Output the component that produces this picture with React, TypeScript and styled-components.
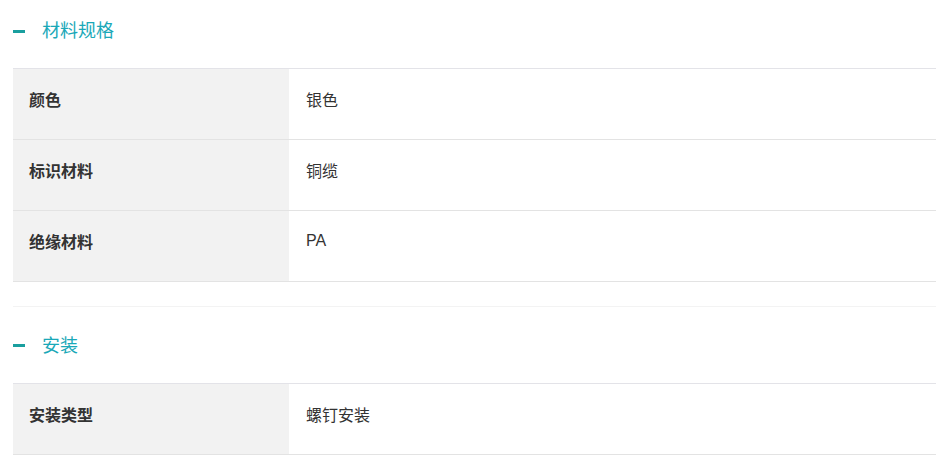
import React from 'react';
import styled, { createGlobalStyle } from 'styled-components';

type SpecRow = {
  label: string
  value: string
}

type SpecSection = {
  title: string
  rows: SpecRow[]
}

const sections: SpecSection[] = [
  {
    title: '材料规格',
    rows: [
      { label: '颜色', value: '银色' },
      { label: '标识材料', value: '铜缆' },
      { label: '绝缘材料', value: 'PA' },
    ],
  },
  {
    title: '安装',
    rows: [{ label: '安装类型', value: '螺钉安装' }],
  },
]

const GlobalStyle = createGlobalStyle`
  body {
    margin: 0;
    background: #fff;
    font-family: "Liberation Sans", "Noto Sans CJK SC", sans-serif;
    color: #333;
  }
`

const Page = styled.div`
  padding: 0 11px 0 13px;
`

const Section = styled.section<{ first: boolean }>`
  border-top: ${props => props.first ? 'none' : '1px solid #f3f3f3'};
  padding-bottom: 24px;
`

const Header = styled.div<{ first: boolean }>`
  display: flex;
  align-items: center;
  height: ${props => props.first ? '68px' : '76px'};
  padding-bottom: ${props => props.first ? '10px' : '3px'};
  box-sizing: border-box;
`

const Minus = styled.span`
  display: inline-block;
  width: 12px;
  height: 3px;
  background: #1a9f9f;
  margin-right: 17px;
  margin-top: 4px;
`

const Title = styled.h3`
  margin: 0;
  font-size: 18px;
  font-weight: normal;
  color: #1aa8b8;
`

const Table = styled.div`
  border-top: 1px solid #e3e3e8;
`

const Row = styled.div`
  display: grid;
  grid-template-columns: 276px 1fr;
  height: 71px;
  border-bottom: 1px solid #e3e3e3;
  box-sizing: border-box;
`

const Label = styled.div`
  display: flex;
  align-items: center;
  background: #f2f2f2;
  padding: 0 0 10px 16px;
  font-size: 16px;
  font-weight: bold;
  color: #333;
`

const Value = styled.div`
  display: flex;
  align-items: center;
  padding: 0 0 10px 17px;
  font-size: 16px;
  color: #333;
`

const App = () => {
  return (
    <>
      <GlobalStyle />
      <Page>
        {sections.map((section, index) => (
          <Section key={section.title} first={index === 0}>
            <Header first={index === 0}>
              <Minus />
              <Title>{section.title}</Title>
            </Header>
            <Table>
              {section.rows.map(row => (
                <Row key={row.label}>
                  <Label>{row.label}</Label>
                  <Value>{row.value}</Value>
                </Row>
              ))}
            </Table>
          </Section>
        ))}
      </Page>
    </>
  );
};

export default App;
